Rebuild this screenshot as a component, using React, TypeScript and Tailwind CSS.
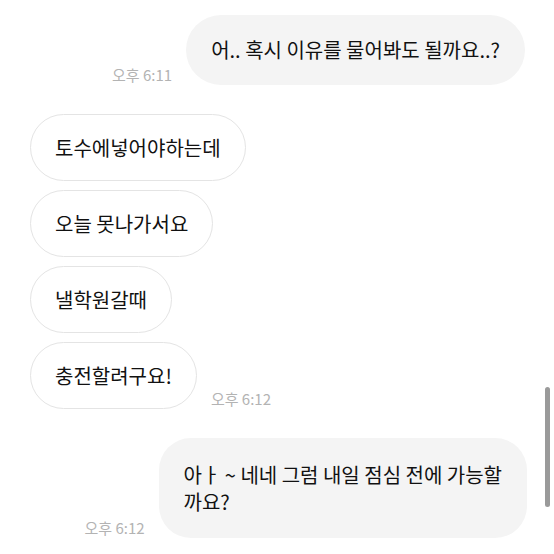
const font = { fontFamily: '"Noto Sans CJK KR", "Noto Sans", sans-serif' };

const Time = ({ children }: { children: string }) => (
  <span className="mb-[3px] shrink-0 text-[15px] leading-none text-[#b3b3b3]">{children}</span>
);

const LeftBubble = ({ text }: { text: string }) => (
  <div className="rounded-[34px] border border-[#e4e4e4] bg-white px-6 py-[18.5px] text-[20px] leading-[28px] text-[#111]">
    {text}
  </div>
);

export default function App() {
  return (
    <div className="relative h-[554px] w-[554px] overflow-hidden bg-white" style={font}>
      <div className="flex flex-col pl-[30px] pr-[27px] pt-[15px]">
        <div className="flex items-end justify-end gap-[14px] pr-[2px]">
          <Time>오후 6:11</Time>
          <div className="rounded-[35px] bg-[#f4f4f4] px-[25px] py-[21px] text-[20px] leading-[28px] text-[#111]">
            어.. 혹시 이유를 물어봐도 될까요..?
          </div>
        </div>

        <div className="mt-[29px] flex flex-col items-start gap-[9px]">
          <LeftBubble text="토수에넣어야하는데" />
          <LeftBubble text="오늘 못나가서요" />
          <LeftBubble text="낼학원갈때" />
          <div className="flex items-end gap-[14px]">
            <LeftBubble text="충전할려구요!" />
            <Time>오후 6:12</Time>
          </div>
        </div>

        <div className="mt-[29px] flex items-end justify-end gap-[14px]">
          <Time>오후 6:12</Time>
          <div className="rounded-[32px] bg-[#f4f4f4] px-[25px] py-[23px] text-[20px] leading-[27px] text-[#111]">
            아ㅏ ~ 네네 그럼 내일 점심 전에 가능할
            <br />
            까요?
          </div>
        </div>
      </div>

      <div className="absolute left-[545px] top-[387px] h-[120px] w-[5px] rounded-full bg-[#9a9a9a]" />
    </div>
  );
}
